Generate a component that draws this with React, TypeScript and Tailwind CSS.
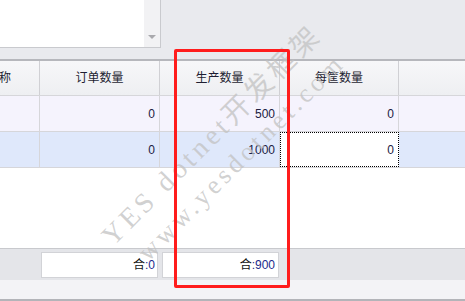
export default function App() {
  const cols = [
    { w: 'w-[120px]', key: 'order' },
    { w: 'w-[120px]', key: 'prod' },
    { w: 'w-[119px]', key: 'box' },
  ];
  const rows = [
    { bg: 'bg-[#f5f3fd]', order: '0', prod: '500', box: '0', focus: false },
    { bg: 'bg-[#dfe8fb]', order: '0', prod: '1000', box: '0', focus: true },
  ];

  return (
    <div
      className="relative w-[465px] h-[301px] overflow-hidden bg-[#e9eaee] flex flex-col"
      style={{ fontFamily: '"Liberation Sans", "Noto Sans CJK SC", sans-serif' }}
    >
      {/* Top memo panel */}
      <div className="h-[61px] shrink-0 border-b-2 border-[#b6b7bc]">
        <div className="flex w-[161px] h-[48px] border-r border-b border-[#c9cace] bg-white">
          <div className="flex-1" />
          <div className="w-[16px] bg-[#f2f2f4] flex items-end justify-center pb-[8px]">
            <div className="w-0 h-0 border-l-[4px] border-r-[4px] border-t-[4px] border-l-transparent border-r-transparent border-t-[#a9a9ad]" />
          </div>
        </div>
      </div>

      {/* Grid header */}
      <div className="flex h-[35px] shrink-0 border-b border-[#d6d6da] bg-gradient-to-b from-[#f7f7f9] to-[#eeeff2] text-[12px] text-[#1e1e32]">
        <div className="w-[40px] border-r border-[#d0d0d4] overflow-hidden flex items-center">
          <span className="ml-[-13px] whitespace-nowrap">名称</span>
        </div>
        <div className="w-[120px] border-r border-[#d0d0d4] flex items-center justify-center">订单数量</div>
        <div className="w-[120px] border-r border-[#d0d0d4] flex items-center justify-center">生产数量</div>
        <div className="w-[119px] border-r border-[#d0d0d4] flex items-center justify-center">每筐数量</div>
        <div className="flex-1" />
      </div>

      {/* Rows */}
      {rows.map((r, i) => (
        <div key={i} className={`flex h-[36px] shrink-0 border-b border-[#d6d6da] ${r.bg} text-[12px] text-[#202042]`}>
          <div className="w-[40px] border-r border-[#d6d6da]" />
          {cols.map((c) => {
            const focused = r.focus && c.key === 'box';
            return (
              <div
                key={c.key}
                className={`${c.w} flex items-center justify-end pr-[4px] ${
                  focused ? 'bg-white border border-dotted border-black' : 'border-r border-[#d6d6da]'
                }`}
              >
                {r[c.key as 'order' | 'prod' | 'box']}
              </div>
            );
          })}
          <div className="flex-1" />
        </div>
      ))}

      {/* Empty area */}
      <div className="flex-1 bg-white" />

      {/* Footer summary */}
      <div className="h-[32px] shrink-0 border-t border-[#c8c9cd] bg-[#e4e5e9] flex gap-[4px] pl-[41px] pt-[3px]">
        <div className="w-[117px] h-[26px] bg-white border border-[#d2d3d7] flex items-center justify-end pr-[2px] text-[12px]">
          <span className="text-[#111]">合</span>
          <span className="text-[#1c2a8c]">:0</span>
        </div>
        <div className="w-[117px] h-[26px] bg-white border border-[#d2d3d7] flex items-center justify-end pr-[3px] text-[12px]">
          <span className="text-[#111]">合</span>
          <span className="text-[#1c2a8c]">:900</span>
        </div>
      </div>
      <div className="h-[21px] shrink-0 bg-[#f3f3f6] border-b-2 border-[#b3b4b9]" />

      {/* Watermark */}
      <div
        className="absolute left-[113px] top-[224px] origin-[0_23px] -rotate-45 whitespace-nowrap text-[28px] leading-none tracking-[4px] text-[#c2c2c2]/75 pointer-events-none"
        style={{ fontFamily: '"Liberation Serif", "Noto Sans CJK SC", serif' }}
      >
        YES dotnet开发框架
      </div>
      <div
        className="absolute left-[149px] top-[241px] origin-[0_22px] -rotate-45 whitespace-nowrap text-[26px] leading-none tracking-[4px] text-[#c2c2c2]/75 pointer-events-none"
        style={{ fontFamily: '"Liberation Serif", "Noto Sans CJK SC", serif' }}
      >
        www.yesdotnet.com
      </div>

      {/* Red highlight box */}
      <div className="absolute left-[174px] top-[49px] w-[116px] h-[239px] border-[3px] border-[#ff1c1c] rounded-[2px] pointer-events-none" />
    </div>
  );
}
